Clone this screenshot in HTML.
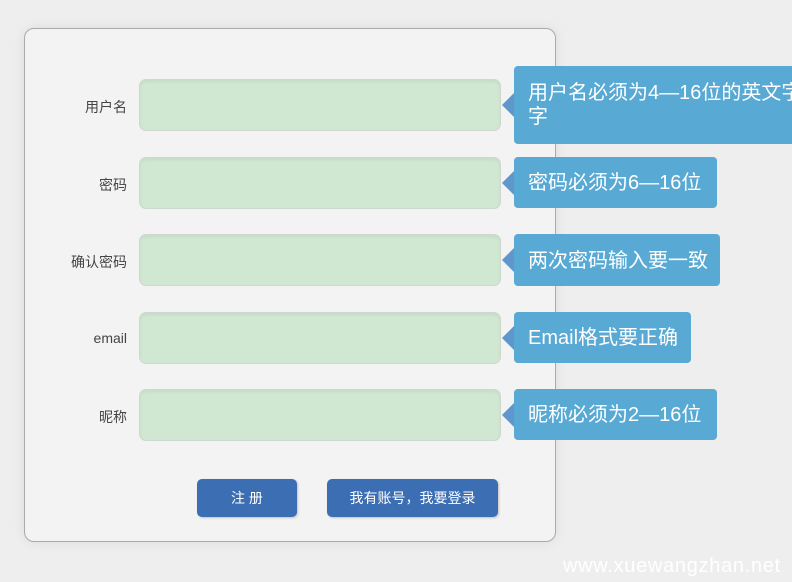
<!DOCTYPE html>
<html><head><meta charset="utf-8"><style>
body{margin:0;width:792px;height:582px;background:#eeeeee;position:relative;overflow:hidden;font-family:"Liberation Sans","Noto Sans CJK SC",sans-serif}
.card{position:absolute;left:24px;top:28px;width:530px;height:512px;background:#f3f3f3;border:1px solid #aaa;border-radius:10px;box-shadow:0 0 12px rgba(0,0,0,.08)}
.lab{position:absolute;right:665px;font-size:14px;color:#444;text-align:right;white-space:nowrap}
.inp{position:absolute;left:139px;width:360px;height:50px;background:#d0e8d2;border:1px solid #cfd8cf;border-radius:7px;box-shadow:inset 0 2px 3px rgba(0,0,0,.06)}
.tip{position:absolute;left:514px;background:#58a9d3;color:#fff;font-size:20px;border-radius:4px;padding:0 13px 0 14px;line-height:24px;box-sizing:border-box;white-space:nowrap}
.tip:before{content:"";position:absolute;left:-12px;top:50%;margin-top:-12px;border:12px solid transparent;border-left:0;border-right-color:#5f97cc;width:0;height:0}
.btn{position:absolute;top:479px;height:38px;background:#3c6eb4;color:#fff;border-radius:5px;font-size:14px;line-height:38px;text-align:center;box-shadow:1px 1px 2px rgba(0,0,0,.2)}
.wm{position:absolute;left:563px;top:555px;color:#fff;font-size:20px;letter-spacing:.7px}
</style></head><body>
<div class="card"></div>
<div class="lab" style="top:97px">用户名</div>
<div class="lab" style="top:175px">密码</div>
<div class="lab" style="top:252px">确认密码</div>
<div class="lab" style="top:330px">email</div>
<div class="lab" style="top:407px">昵称</div>
<div class="inp" style="top:79px"></div>
<div class="inp" style="top:157px"></div>
<div class="inp" style="top:234px"></div>
<div class="inp" style="top:312px"></div>
<div class="inp" style="top:389px"></div>
<div class="tip" style="top:66px;height:78px;width:300px;padding-top:15px">用户名必须为4—16位的英文字<br>字</div>
<div class="tip" style="top:157px;height:51px;width:203px;line-height:53px">密码必须为6—16位</div>
<div class="tip" style="top:234px;height:52px;width:206px;line-height:54px">两次密码输入要一致</div>
<div class="tip" style="top:312px;height:51px;width:177px;line-height:53px">Email格式要正确</div>
<div class="tip" style="top:389px;height:51px;width:203px;line-height:53px">昵称必须为2—16位</div>
<div class="btn" style="left:197px;width:100px">注 册</div>
<div class="btn" style="left:327px;width:171px">我有账号，我要登录</div>
<div class="wm">www.xuewangzhan.net</div>
</body></html>
